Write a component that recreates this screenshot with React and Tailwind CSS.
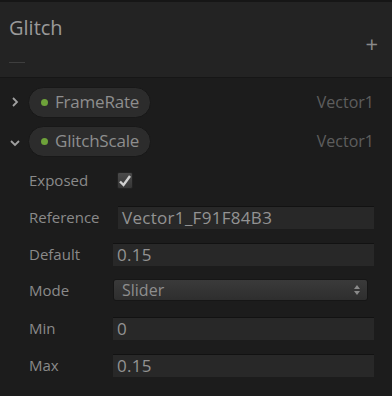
import React from 'react';

const font = { fontFamily: '"Open Sans", "Noto Sans", sans-serif' };

const Pill = ({ label }) => (
    <div className="flex h-[31px] items-center rounded-full border border-[#181818] bg-[#2c2c2c] pl-[12px] pr-[11px]">
        <span className="mr-[7px] h-[7px] w-[7px] rounded-full bg-[#6ea23a]" />
        <span className="text-[17px] tracking-[-0.2px] text-[#8e8e8e]">{label}</span>
    </div>
);

const Field = ({ label, value, indent }) => (
    <div className="flex h-[37px] items-center pl-[29px] pr-[18px]">
        <span className={indent ? 'w-[89px] text-[15px] text-[#8a8a8a]' : 'w-[84px] text-[15px] text-[#8a8a8a]'}>{label}</span>
        <div className="flex h-[23px] flex-1 items-center border-t border-[#121212] bg-[#282828] pl-[4px]">
            <span className="text-[17px] tracking-[0.3px] text-[#939393]">{value}</span>
        </div>
    </div>
);

const App = () => {
    return (
        <div className="h-[396px] w-[392px] overflow-hidden bg-[#1c1c1c]" style={font}>
            {/* header */}
            <div className="relative h-[78px] border-t-2 border-b border-[#161616] bg-[#232323]">
                <div className="pl-[9px] pt-[11px] text-[20px] text-[#9a9a9a]">Glitch</div>
                <div className="ml-[9px] mt-[19px] h-px w-[16px] bg-[#3e3e3e]" />
                <div className="absolute right-[14px] top-[30px] text-[22px] leading-none text-[#8a8a8a]">+</div>
            </div>

            {/* property rows */}
            <div className="flex h-[42px] items-center pr-[18px] pt-[6px]">
                <div className="flex w-[28px] justify-center pl-[2px]">
                    <svg width="10" height="12" viewBox="0 0 10 12"><path d="M3 2 L7 6 L3 10" stroke="#a0a0a0" strokeWidth="1.8" fill="none" /></svg>
                </div>
                <Pill label="FrameRate" />
                <span className="ml-auto text-[16px] text-[#5e5e5e]">Vector1</span>
            </div>
            <div className="flex h-[42px] items-center pr-[18px]">
                <div className="flex w-[28px] justify-center pl-[1px] pt-[4px]">
                    <svg width="12" height="10" viewBox="0 0 12 10"><path d="M2 3 L6 7 L10 3" stroke="#a0a0a0" strokeWidth="1.8" fill="none" /></svg>
                </div>
                <Pill label="GlitchScale" />
                <span className="ml-auto text-[16px] text-[#5e5e5e]">Vector1</span>
            </div>

            {/* settings */}
            <div>
                <div className="flex h-[37px] items-center pl-[29px]">
                    <span className="w-[88px] text-[15px] text-[#8a8a8a]">Exposed</span>
                    <div className="flex h-[17px] w-[16px] items-center justify-center rounded-[2px] border border-[#222] bg-gradient-to-b from-[#4a4a4a] to-[#363636]">
                        <svg width="14" height="14" viewBox="0 0 14 14"><path d="M2 7.5 L5.5 11 L12 2" stroke="#d0d0d0" strokeWidth="2.4" fill="none" /></svg>
                    </div>
                </div>
                <Field label="Reference" value="Vector1_F91F84B3" indent />
                <Field label="Default" value="0.15" />
                <div className="flex h-[37px] items-center pl-[29px] pr-[24px] pb-[3px]">
                    <span className="w-[84px] text-[15px] text-[#8a8a8a]">Mode</span>
                    <div className="flex h-[22px] flex-1 items-center justify-between rounded-[3px] border border-[#161616] bg-gradient-to-b from-[#3a3a3a] to-[#2e2e2e] pl-[8px] pr-[7px]">
                        <span className="text-[16px] text-[#8e8e8e]">Slider</span>
                        <svg width="6" height="10" viewBox="0 0 6 10"><path d="M0 4 L3 0 L6 4 Z M0 6 L3 10 L6 6 Z" fill="#8a8a8a" /></svg>
                    </div>
                </div>
                <Field label="Min" value="0" />
                <Field label="Max" value="0.15" />
            </div>
        </div>
    );
};

export default App;
